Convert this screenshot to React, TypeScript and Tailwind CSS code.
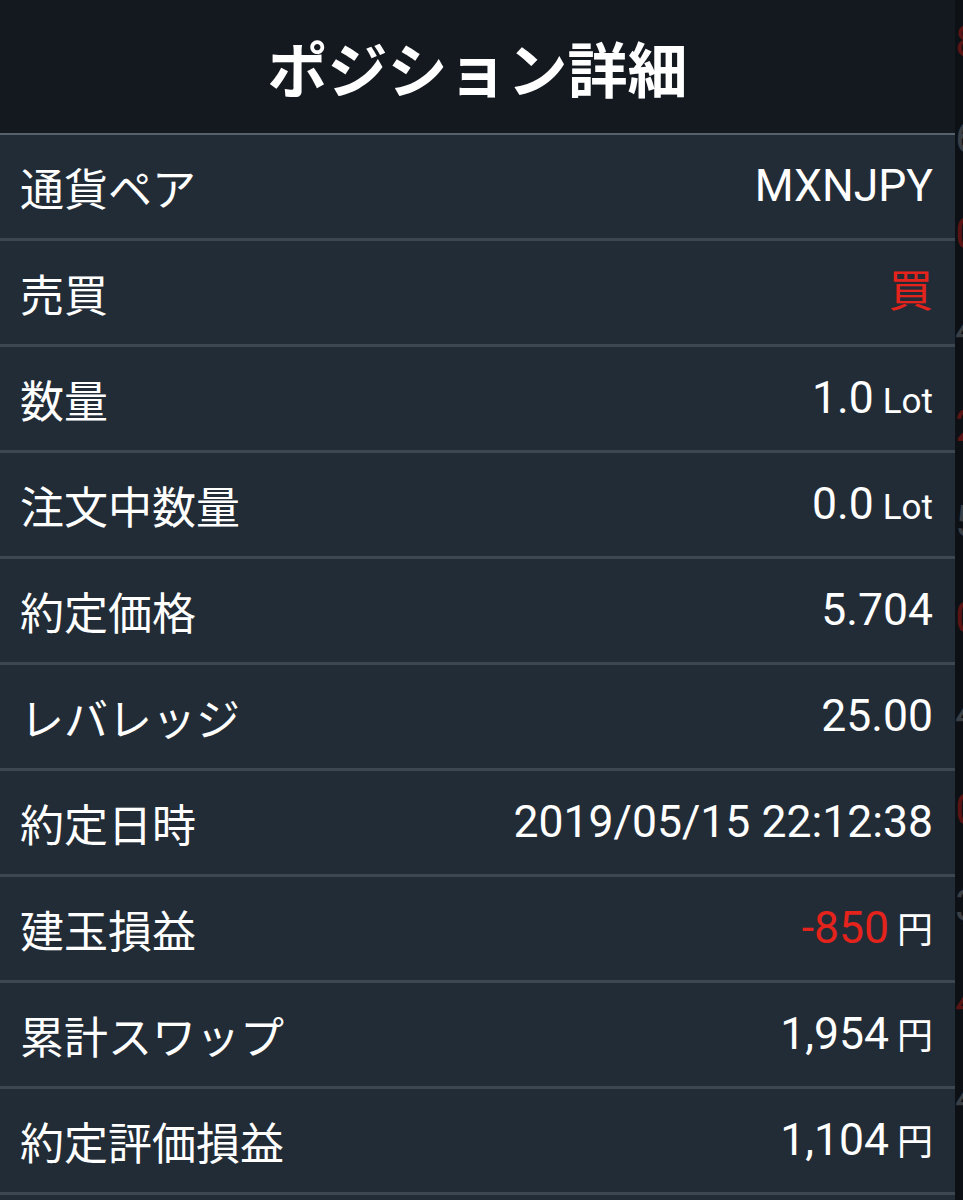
import React from "react";

type Row = { label: string; value: React.ReactNode };

const rows: Row[] = [
  { label: "通貨ペア", value: <span>MXNJPY</span> },
  { label: "売買", value: <span className="text-[#e3231c]">買</span> },
  { label: "数量", value: <span>1.0<span className="ml-[9px] text-[35px]">Lot</span></span> },
  { label: "注文中数量", value: <span>0.0<span className="ml-[9px] text-[35px]">Lot</span></span> },
  { label: "約定価格", value: <span>5.704</span> },
  { label: "レバレッジ", value: <span>25.00</span> },
  { label: "約定日時", value: <span>2019/05/15 22:12:38</span> },
  { label: "建玉損益", value: <span><span className="text-[#e3231c]">-850</span><span className="ml-[8px] text-[36px]">円</span></span> },
  { label: "累計スワップ", value: <span>1,954<span className="ml-[8px] text-[36px]">円</span></span> },
  { label: "約定評価損益", value: <span>1,104<span className="ml-[8px] text-[36px]">円</span></span> },
];

const strip = [
  { t: "8", c: "text-[#5a1414]" },
  { t: "6", c: "text-[#3a3f45]" },
  { t: "0", c: "text-[#5a1414]" },
  { t: "4", c: "text-[#3a3f45]" },
  { t: "2", c: "text-[#5a1414]" },
  { t: "5", c: "text-[#3a3f45]" },
  { t: "0", c: "text-[#5a1414]" },
  { t: "4", c: "text-[#3a3f45]" },
  { t: "0", c: "text-[#5a1414]" },
  { t: "3", c: "text-[#3a3f45]" },
  { t: "4", c: "text-[#5a1414]" },
  { t: "4", c: "text-[#3a3f45]" },
];

export default function App() {
  return (
    <div
      className="flex h-[1200px] w-[963px] overflow-hidden bg-[#0d1116]"
      style={{ fontFamily: "Roboto, 'Noto Sans CJK JP', sans-serif" }}
    >
      <div className="flex w-[955px] flex-col">
        <div className="flex h-[133px] shrink-0 items-center justify-center bg-[#141920]">
          <h1
            className="text-[60px] font-bold leading-none text-white"
            style={{ fontFamily: "'Noto Sans CJK JP', sans-serif" }}
          >
            ポジション詳細
          </h1>
        </div>
        <div className="h-[2px] shrink-0 bg-[#56616c]" />
        {rows.map((r, i) => (
          <div key={i} className="flex shrink-0 flex-col">
            <div className="flex h-[103px] items-center justify-between bg-[#222c36] pl-[20px] pr-[22px] text-white">
              <span
                className="text-[44px] leading-none"
                style={{ fontFamily: "'Noto Sans CJK JP', sans-serif" }}
              >
                {r.label}
              </span>
              <span
                className="text-[44.5px] leading-none"
                style={{ fontFamily: "Roboto, 'Noto Sans CJK JP', sans-serif" }}
              >
                {r.value}
              </span>
            </div>
            <div className="h-[3px] bg-[#3c4752]" />
          </div>
        ))}
        <div className="flex-1 bg-[#222c36]" />
      </div>
      <div className="flex w-[8px] flex-col overflow-hidden pt-[20px]">
        {strip.map((s, i) => (
          <div key={i} className={`h-[96px] shrink-0 text-[44px] leading-none ${s.c}`}>
            {s.t}
          </div>
        ))}
      </div>
    </div>
  );
}
